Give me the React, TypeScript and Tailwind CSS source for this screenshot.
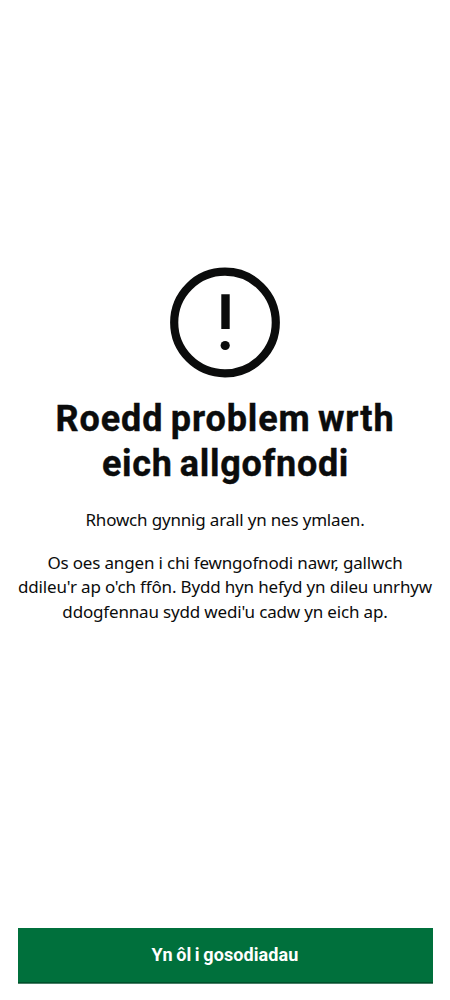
import React from "react";

export default function App() {
  return (
    <main className="flex h-[1000px] w-[450px] flex-col items-center overflow-hidden bg-white font-['Noto_Sans',sans-serif] text-[#0b0c0c]">
      <svg className="mt-[267px] h-[111px] w-[110px] shrink-0" viewBox="0 0 110 111" fill="none" aria-hidden="true">
        <circle cx="55" cy="55.5" r="50.8" stroke="#0b0c0c" strokeWidth="8.2" />
        <path d="M51.3 27.2h8.4v34.8h-8.4z" fill="#0b0c0c" />
        <circle cx="55.2" cy="78.5" r="4.6" fill="#0b0c0c" />
      </svg>
      <h1 className="mt-[19px] text-center font-['Roboto',sans-serif] text-[36px] leading-[45px] font-bold tracking-[0.9px] whitespace-nowrap [word-spacing:-2.5px] [-webkit-text-stroke:0.4px_#0b0c0c]">
        <span className="block">Roedd problem wrth</span>
        <span className="block pl-px tracking-[0.7px]">eich allgofnodi</span>
      </h1>
      <p className="mt-[21px] text-center text-[17px] leading-6 tracking-[-0.18px] whitespace-nowrap">
        Rhowch gynnig arall yn nes ymlaen.
      </p>
      <p className="mt-[19px] text-center text-[17px] leading-[24.3px] tracking-[-0.17px] whitespace-nowrap">
        <span className="block">Os oes angen i chi fewngofnodi nawr, gallwch</span>
        <span className="block">ddileu'r ap o'ch ffôn. Bydd hyn hefyd yn dileu unrhyw</span>
        <span className="block">ddogfennau sydd wedi'u cadw yn eich ap.</span>
      </p>
      <button className="mt-auto mb-4 h-14 w-[415px] shrink-0 border-b border-[#4a8067] bg-[#00703c] pb-[3px] font-['Roboto',sans-serif] text-[18px] font-bold tracking-[0.1px] text-white shadow-[inset_0_-1px_0_#00512b] [word-spacing:-1px]">
        Yn ôl i gosodiadau
      </button>
    </main>
  );
}
